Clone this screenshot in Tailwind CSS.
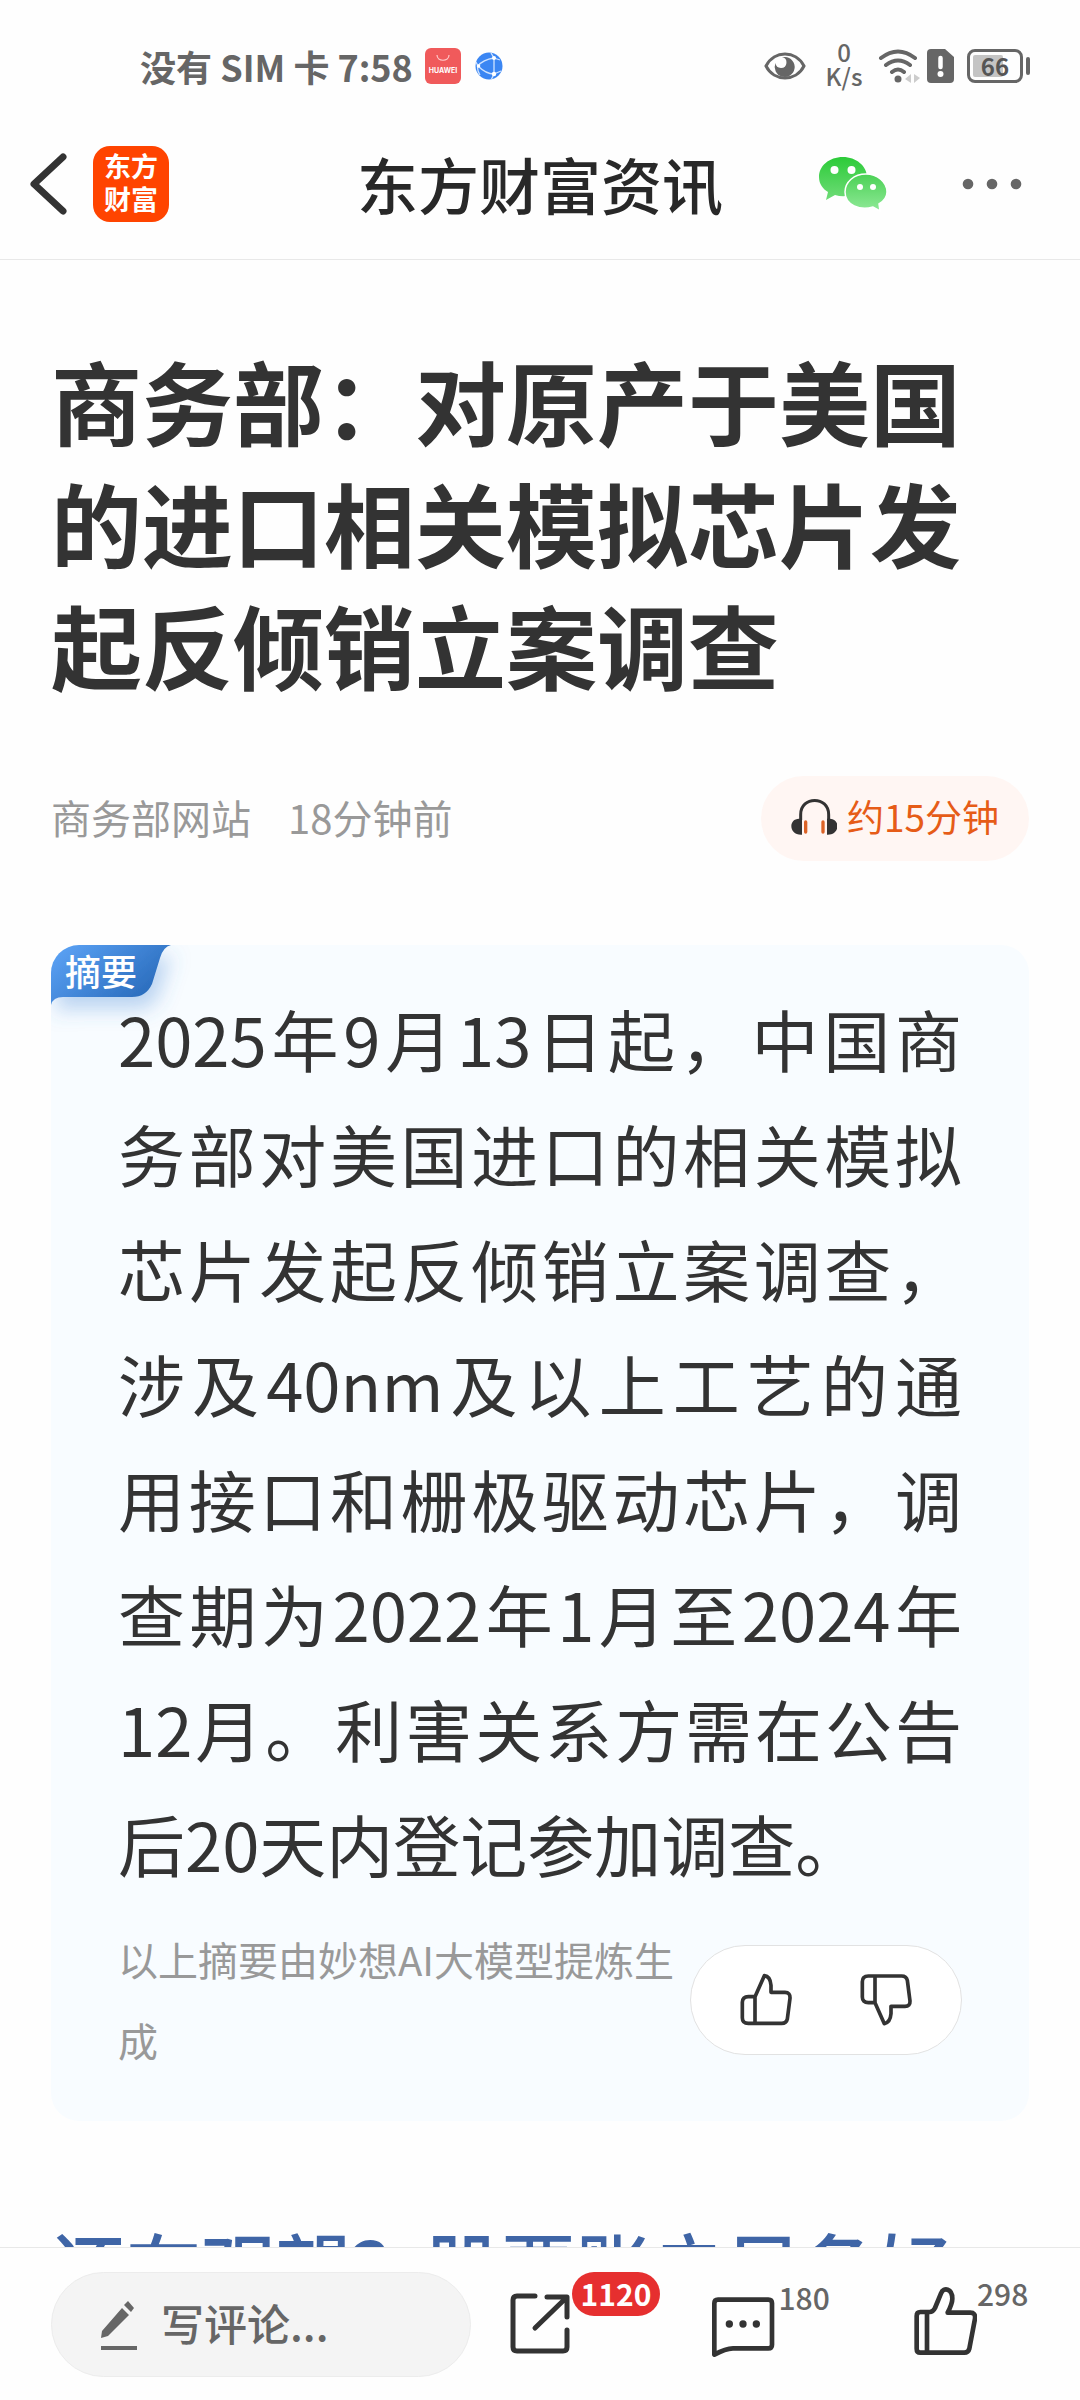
<!DOCTYPE html>
<html lang="zh-CN">
<head>
    <meta charset="UTF-8">
    <meta name="viewport" content="width=device-width, initial-scale=1.0">
    <title>东方财富资讯</title>
    <script src="https://cdn.jsdelivr.net/npm/@tailwindcss/browser@4"></script>
</head>
<body class="h-screen flex flex-col overflow-hidden bg-[#fefefe] text-[#333] font-['Noto_Sans_CJK_SC',sans-serif]">
    <!-- Status bar -->
    <div class="h-[108px] shrink-0 pt-6 pl-[140px] pr-[50px] flex items-center justify-between text-[#666] font-medium">
        <div class="flex items-center">
            <span class="text-[36px] leading-10 font-bold">没有 SIM 卡</span>
            <span class="ml-2 text-[36px] leading-10 font-bold">7:58</span>
            <svg class="ml-3 w-9 h-9" viewBox="0 0 36 36">
                <rect width="36" height="36" rx="6" fill="#f05a5b"/>
                <path d="M12 7c0 7 12 7 12 0" fill="none" stroke="#fcc" stroke-width="1.2"/>
                <text x="18" y="25" text-anchor="middle" font-size="7" font-weight="700" fill="#fff" font-family="Inter, sans-serif">HUAWEI</text>
            </svg>
            <svg class="ml-[14px] w-7 h-7" viewBox="0 0 28 28">
                <circle cx="14" cy="14" r="13.5" fill="#3b86f3"/>
                <path d="M16 1l3 5v16l-3 6M19 6C12 7 6 10 3 14c5 5 10 8 16 8M3 14L1 10M19 6l6 2M19 22l7-3M3 14c-1 3 0 6 2 9" fill="none" stroke="#cfe3ff" stroke-width="1.3"/>
                <circle cx="19" cy="6" r="2" fill="#fff"/><circle cx="3.500" cy="14" r="1.800" fill="#fff"/><circle cx="19" cy="22" r="2.200" fill="#fff"/>
            </svg>
        </div>
        <div class="flex items-center">
            <svg class="w-[42px] h-7" viewBox="0 0 42 28">
                <path d="M2 14C10 -2 32 -2 40 14C32 30 10 30 2 14Z" fill="none" stroke="#666" stroke-width="3"/>
                <path d="M21 5A10 10 0 1 1 11.500 11A5.500 5.500 0 1 0 18 5Z" fill="#666"/>
            </svg>
            <div class="ml-5 w-9 pb-1 flex flex-col items-center text-[24px] leading-6">
                <span>0</span>
                <span>K/s</span>
            </div>
            <svg class="ml-4 w-[42px] h-9" viewBox="0 0 42 36">
                <g fill="none" stroke="#666" stroke-width="4" stroke-linecap="round">
                    <path d="M3 10Q20 -3 37 10M8 17Q20 8 32 17M14 24Q20 19 26 24"/>
                </g>
                <circle cx="20" cy="31" r="3.500" fill="#666"/>
                <path d="M33 26v9l-6 -4zM36 26v9l6-5z" fill="#ccc"/>
            </svg>
            <svg class="ml-[7px] w-[27px] h-[34px]" viewBox="0 0 27 34">
                <path d="M4 0H18L27 8V30Q27 34 23 34H4Q0 34 0 30V4Q0 0 4 0Z" fill="#666"/>
                <path d="M13.500 9V18" stroke="#fff" stroke-width="4.500" stroke-linecap="round"/>
                <circle cx="13.500" cy="25" r="3" fill="#fff"/>
            </svg>
            <div class="ml-[13px] w-14 h-[34px] border-3 border-[#666] rounded-lg p-[3px] relative">
                <div class="w-[30px] h-full bg-[#c4c4c4] rounded-xs"></div>
                <span class="absolute inset-0 text-center text-[24px] leading-7 font-bold text-[#555]">66</span>
            </div>
            <div class="ml-[3px] w-1 h-[18px] bg-[#666] rounded-sm"></div>
        </div>
    </div>

    <!-- Header -->
    <header class="h-[152px] shrink-0 px-[28px] grid grid-cols-[1fr_auto_1fr] items-center border-b border-[#e8e8e8]">
        <div class="flex items-center">
            <button aria-label="返回">
                <svg class="w-10 h-16" viewBox="0 0 40 64"><path d="M35 5L6 32L35 59" fill="none" stroke="#333" stroke-width="7" stroke-linecap="round" stroke-linejoin="round"/></svg>
            </button>
            <a href="#" class="ml-[25px] w-[76px] h-[76px] rounded-[17px] bg-[#ff4400] text-white text-[27px] leading-[33px] font-bold text-center flex flex-col justify-center pb-1">
                <span>东方</span>
                <span>财富</span>
            </a>
        </div>
        <h1 class="text-[61px] leading-[80px] font-medium text-[#282828]">东方财富资讯</h1>
        <div class="flex items-center justify-end pr-[30px]">
            <button aria-label="微信">
                <svg class="w-[72px] h-[58px]" viewBox="0 0 72 58">
                    <defs>
                        <linearGradient id="wxBig" x1="0" y1="0" x2="0" y2="1"><stop offset="0" stop-color="#2ccb38"/><stop offset="1" stop-color="#6fdc78"/></linearGradient>
                        <linearGradient id="wxSmall" x1="0" y1="0" x2="0" y2="1"><stop offset="0" stop-color="#4bd155"/><stop offset="1" stop-color="#8fe997"/></linearGradient>
                    </defs>
                    <path d="M26 2C12 2 2 11 2 22C2 29 6 34 11 37L9 45L18 40C31 44 50 38 50 22C50 11 39 2 26 2Z" fill="url(#wxBig)"/>
                    <path d="M49 19C37 19 28 27 28 37C28 50 43 56 56 52L63 56L62 49C67 46 70 42 70 37C70 27 60 19 49 19Z" fill="url(#wxSmall)" stroke="#fff" stroke-width="1.500"/>
                    <g fill="#fff"><circle cx="17.500" cy="15" r="4"/><circle cx="34.500" cy="15" r="4"/><circle cx="43" cy="32" r="3"/><circle cx="56" cy="32" r="3"/></g>
                </svg>
            </button>
            <button aria-label="更多" class="ml-[73px]">
                <svg class="w-[60px] h-3" viewBox="0 0 60 12"><g fill="#666"><circle cx="6" cy="6" r="5.300"/><circle cx="30" cy="6" r="5.300"/><circle cx="54" cy="6" r="5.300"/></g></svg>
            </button>
        </div>
    </header>

    <!-- Article -->
    <main class="flex-1 min-h-0 overflow-hidden px-[51px] pt-[78px]">
        <h2 class="text-[91px] leading-[122px] font-bold">商务部：对原产于美国的进口相关模拟芯片发起反倾销立案调查</h2>

        <div class="mt-[72px] flex items-center justify-between">
            <div class="pb-1 flex gap-[37px] text-[40px] leading-[60px] text-[#999]">
                <span>商务部网站</span>
                <span>18分钟前</span>
            </div>
            <button class="h-[85px] px-[30px] pb-1 rounded-full bg-[#fff6f3] flex items-center gap-[10px] text-[37px] text-[#e65c17]">
                <svg class="w-[46px] h-[38px]" viewBox="0 0 138 114">
                    <path d="M29 66V50C29 -7 113 -7 113 50V66" fill="none" stroke="#333" stroke-width="9"/>
                    <path d="M33 62V110C-8 112 -8 62 24 62ZM108 62V110C148 112 148 62 117 62Z" fill="#333"/>
                    <path d="M44 72V102M96 72V102" stroke="#dc6327" stroke-width="10" stroke-linecap="round"/>
                </svg>
                约15分钟
            </button>
        </div>

        <section class="relative mt-[84px] px-[67px] pt-[35px] pb-10 rounded-[28px] bg-[#f8fcff] overflow-hidden">
            <div class="absolute top-0 left-0">
                <svg class="w-[160px] h-[100px]" viewBox="0 0 160 100">
                    <defs>
                        <linearGradient id="tag" x1="0" y1="0" x2="1" y2="0.600"><stop offset="0" stop-color="#5ea5f8"/><stop offset="1" stop-color="#286aba"/></linearGradient>
                        <filter id="tagShadow" x="-20%" y="-20%" width="160%" height="200%"><feDropShadow dx="6" dy="12" stdDeviation="10" flood-color="#3f86d6" flood-opacity="0.350"/></filter>
                    </defs>
                    <path d="M0 0H120Q112 2 109 13L101 39Q95 52 81 52H12Q2 52 0 60Z" fill="url(#tag)" filter="url(#tagShadow)"/>
                </svg>
                <span class="absolute top-0 left-[14px] text-[36px] leading-[50px] font-medium text-white whitespace-nowrap">摘要</span>
            </div>
            <p class="relative text-[67px] leading-[115px] text-justify">2025年9月13日起，中国商务部对美国进口的相关模拟芯片发起反倾销立案调查，涉及40nm及以上工艺的通用接口和栅极驱动芯片，调查期为2022年1月至2024年12月。利害关系方需在公告后20天内登记参加调查。</p>
            <div class="mt-[19px] flex items-center">
                <p class="flex-1 text-[40px] leading-[81px] text-[#999]">以上摘要由妙想AI大模型提炼生成</p>
                <div class="w-[272px] h-[110px] px-12 flex items-center justify-between rounded-full bg-white border border-[#e2e2e2]">
                    <button aria-label="赞同">
                        <svg class="w-[54px] h-[54px]" viewBox="0 0 162 162" fill="none" stroke="#333" stroke-width="11" stroke-linejoin="round">
                            <path d="M48 71H28Q10 71 10 88V134Q10 151 28 151H128Q142 151 145 138L153 76Q154 58 138 58H96V37Q94 10 76 8ZM48 71V151"/>
                        </svg>
                    </button>
                    <button aria-label="反对">
                        <svg class="w-[54px] h-[54px]" viewBox="0 0 162 162" fill="none" stroke="#333" stroke-width="11" stroke-linejoin="round">
                            <path d="M48 89H28Q10 89 10 72V26Q10 9 28 9H128Q142 9 145 22L153 84Q154 100 138 100H96V122Q94 148 76 152ZM48 89V9"/>
                        </svg>
                    </button>
                </div>
            </div>
        </section>

        <a href="#" class="block mt-[94px] text-[75px] leading-[100px] font-medium text-[#3f65a6] whitespace-nowrap">还在观望？股票账户早备好</a>
    </main>

    <!-- Bottom bar -->
    <footer class="h-[153px] shrink-0 pl-[51px] pr-[103px] pt-6 flex items-start border-t border-[#e8e8e8] bg-[#fefefe]">
        <label class="w-[420px] h-[105px] pl-[47px] flex items-center rounded-full bg-[#f4f4f4] border border-[#ececec]">
            <svg class="w-10 h-[52px] shrink-0" viewBox="0 0 40 52" fill="#666">
                <path d="M2 39L3 32L23 9L30 16L9 37ZM29 2L35 9L32 13L25 6ZM2 47H38V51H2Z"/>
            </svg>
            <input type="text" placeholder="写评论..." aria-label="写评论" class="ml-[22px] pb-1 w-0 flex-1 text-[43px] font-medium outline-none placeholder:text-[#666]">
        </label>
        <div class="flex-1 pl-[37px] flex items-start justify-between">
            <button aria-label="分享" class="relative w-16">
                <svg class="mt-[19px] w-16 h-16" viewBox="0 0 64 64" fill="none" stroke="#333" stroke-width="5" stroke-linecap="round" stroke-linejoin="round">
                    <path d="M27 5H9Q5 5 5 9V56Q5 60 9 60H55Q59 60 59 56V39M39 6H59V26M58 7L27 37"/>
                </svg>
                <span class="absolute left-full top-0 w-[88px] h-11 rounded-full bg-[#e62f2f] text-white text-[30px] leading-[42px] font-bold">1120</span>
            </button>
            <button aria-label="评论" class="relative w-16">
                <svg class="mt-6 w-16 h-[62px]" viewBox="0 0 192 186" fill="none" stroke="#333" stroke-width="14" stroke-linejoin="round">
                    <path d="M10 176V22Q10 11 21 11H172Q183 11 183 22V146Q183 157 172 157H66Q44 157 10 176Z"/>
                    <g fill="#333" stroke="none"><circle cx="55" cy="84" r="11"/><circle cx="96" cy="84" r="11"/><circle cx="136" cy="84" r="11"/></g>
                </svg>
                <span class="absolute left-full top-1 pl-1 text-[30px] leading-[42px] font-medium text-[#666]">180</span>
            </button>
            <button aria-label="点赞" class="relative w-16">
                <svg class="mt-[14px] w-16 h-[70px]" viewBox="0 0 192 210" fill="none" stroke="#333" stroke-width="14" stroke-linejoin="round">
                    <path d="M41 78H22Q11 78 11 90V188Q11 200 22 200H154Q166 200 169 188L186 98Q188 80 172 80H104Q118 52 118 38C118 8 92 2 84 22L66 66Q60 78 50 78ZM42 78V200"/>
                </svg>
                <span class="absolute left-full top-0 text-[30px] leading-[42px] font-medium text-[#666]">298</span>
            </button>
        </div>
    </footer>
</body>
</html>
